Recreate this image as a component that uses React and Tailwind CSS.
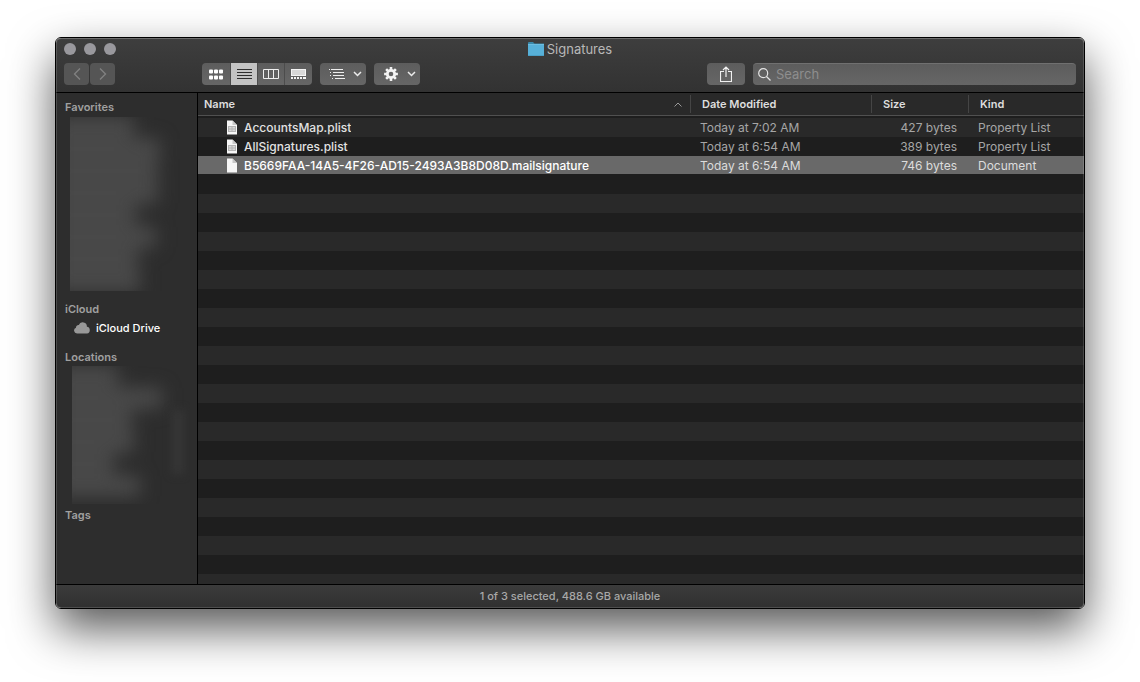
import React, { useState } from "react";

const files = [
  {
    name: "AccountsMap.plist",
    modified: "Today at 7:02 AM",
    size: "427 bytes",
    kind: "Property List",
    plist: true,
  },
  {
    name: "AllSignatures.plist",
    modified: "Today at 6:54 AM",
    size: "389 bytes",
    kind: "Property List",
    plist: true,
  },
  {
    name: "B5669FAA-14A5-4F26-AD15-2493A3B8D08D.mailsignature",
    modified: "Today at 6:54 AM",
    size: "746 bytes",
    kind: "Document",
    plist: false,
  },
];

const FolderIcon = () => (
  <svg width="16" height="14" viewBox="0 0 16 14" aria-hidden="true">
    <path d="M0 1Q0 0 1 0H5L6.5 1.5H16V5H0Z" fill="#3a87a8" />
    <path d="M0 2.5H16V14H0Z" fill="#57b0d8" />
    <path d="M0 2H16V3H0Z" fill="#6cbcdf" />
    <path d="M0 13H16V14H0Z" fill="#4a9fc6" />
  </svg>
);

const FileIcon = ({ plist }) => (
  <svg width="12" height="15" viewBox="0 0 12 15" className="shrink-0" aria-hidden="true">
    <path d="M1 .5H6.5L11 5V14.5H1Z" fill="#f6f6f6" />
    <path d="M6.5 .5V5H11Z" fill="#c8c8c8" />
    {plist && (
      <g>
        <rect x="2" y="6" width="8" height="6" fill="#b4b4b4" />
        <path d="M3 7H5.5V8.5H3ZM6.5 7H9V8.5H6.5ZM3 9.5H5.5V11H3ZM6.5 9.5H9V11H6.5Z" fill="#d8d8d8" />
      </g>
    )}
  </svg>
);

const ChevronDown = () => (
  <svg width="9" height="6" viewBox="0 0 9 6" fill="none" stroke="#ececec" strokeWidth="1.5" aria-hidden="true">
    <path d="M1 1L4.5 4.5L8 1" />
  </svg>
);

const GridIcon = () => (
  <svg width="15" height="11" viewBox="0 0 15 11" fill="#fff" aria-hidden="true">
    {[0, 5, 10].map((x) => (
      <g key={x}>
        <rect x={x} y="0.5" width="4" height="4" rx="1" />
        <rect x={x} y="6.5" width="4" height="4" rx="1" />
      </g>
    ))}
  </svg>
);

const ListIcon = () => (
  <svg width="15" height="10" viewBox="0 0 15 10" stroke="#2e2e2e" aria-hidden="true">
    <path d="M0 .5H15M0 3.5H15M0 6.5H15M0 9.5H15" />
  </svg>
);

const ColumnsIcon = () => (
  <svg width="16" height="10" viewBox="0 0 16 10" fill="none" stroke="#efefef" aria-hidden="true">
    <path d="M.5 .5H15.5V9.5H.5ZM5.5 .5V9.5M10.5 .5V9.5" />
  </svg>
);

const GalleryIcon = () => (
  <svg width="15" height="10" viewBox="0 0 15 10" aria-hidden="true">
    <rect x=".5" y=".5" width="14" height="6" fill="#d9d9d9" stroke="#f5f5f5" />
    <path d="M0 9H2M3 9H5M6 9H8M9 9H11M12 9H15" stroke="#f5f5f5" strokeWidth="2" />
  </svg>
);

const ArrangeIcon = () => (
  <svg width="17" height="10" viewBox="0 0 17 10" stroke="#efefef" aria-hidden="true">
    <path d="M0 .5H1M2 .5H14M1 3.5H2M4 3.5H15M1 6.5H2M4 6.5H15M3 9.5H4M6 9.5H16" />
  </svg>
);

const GearIcon = () => (
  <svg width="14" height="14" viewBox="-7 -7 14 14" aria-hidden="true">
    <circle r="3.7" fill="none" stroke="#f2f2f2" strokeWidth="2.8" />
    {[0, 45, 90, 135].map((angle) => (
      <path
        key={angle}
        d="M0 -6.9V-4M0 4V6.9"
        stroke="#f2f2f2"
        strokeWidth="2.6"
        transform={`rotate(${angle})`}
      />
    ))}
  </svg>
);

const ShareIcon = () => (
  <svg width="12" height="16" viewBox="0 0 12 16" fill="none" stroke="#f0f0f0" aria-hidden="true">
    <path d="M4 5.5H.5V15.5H11.5V5.5H8M6 11V1.2M3 4L6 1L9 4" strokeWidth="1.2" />
  </svg>
);

const SearchIcon = () => (
  <svg width="13" height="13" viewBox="0 0 13 13" fill="none" stroke="#e4e4e4" strokeWidth="1.2" aria-hidden="true">
    <circle cx="5.2" cy="5.2" r="4.5" />
    <path d="M8.5 8.5L12.5 12.5" />
  </svg>
);

const CloudIcon = () => (
  <svg width="16" height="12" viewBox="0 0 16 12" aria-hidden="true">
    <path
      d="M3 11.5A3 3 0 0 1 2 5.7A2.5 2.5 0 0 1 4.8 3A4.2 4.2 0 0 1 12.9 4.8A3.4 3.4 0 0 1 13 11.5Z"
      fill="#989898"
    />
  </svg>
);

const views = [
  { id: "icons", label: "Icons", Icon: GridIcon, width: "w-[29px]" },
  { id: "list", label: "List", Icon: ListIcon, width: "w-[27px]" },
  { id: "columns", label: "Columns", Icon: ColumnsIcon, width: "w-[27px]" },
  { id: "gallery", label: "Gallery", Icon: GalleryIcon, width: "w-[27px]" },
];

const Toolbar = () => {
  const [view, setView] = useState("list");
  const [query, setQuery] = useState("");

  const buttonStyle = "flex items-center bg-linear-to-b from-[#5d5d5d] to-[#666666]";

  return (
    <header className="border-b border-black bg-linear-to-b from-[#3e3e3e] to-[#323232]">
      <div className="grid h-6 grid-cols-[1fr_auto_1fr] items-center px-2 pb-[2px]">
        <div className="flex gap-2">
          <button aria-label="Close" className="size-3 rounded-full bg-[#99989d]" />
          <button aria-label="Minimize" className="size-3 rounded-full bg-[#99989d]" />
          <button aria-label="Zoom" className="size-3 rounded-full bg-[#99989d]" />
        </div>
        <h1 className="flex items-center gap-[3px] text-[13px] leading-4 text-[#b8b8b8]">
          <FolderIcon />
          Signatures
        </h1>
      </div>

      <div className="flex h-[30px] px-2 pt-px">
        <div className="mr-[87px] flex h-[22px] gap-px text-[#828282]">
          <button aria-label="Back" className="flex w-[25px] items-center justify-center rounded bg-[#555555]">
            <svg width="8" height="12" viewBox="0 0 8 12" fill="none" stroke="currentColor" strokeWidth="1.3">
              <path d="M7 .5L1.5 6L7 11.5" />
            </svg>
          </button>
          <button aria-label="Forward" className="flex w-[25px] items-center justify-center rounded bg-[#555555]">
            <svg width="8" height="12" viewBox="0 0 8 12" fill="none" stroke="currentColor" strokeWidth="1.3">
              <path d="M1 .5L6.5 6L1 11.5" />
            </svg>
          </button>
        </div>

        <div className="mr-2 flex h-[22px] divide-x divide-[#4c4c4c] overflow-hidden rounded">
          {views.map(({ id, label, Icon, width }) => (
            <button
              key={id}
              aria-label={label}
              onClick={() => setView(id)}
              className={`flex items-center justify-center ${width} ${
                view === id ? "bg-[#c3c3c3]" : "bg-linear-to-b from-[#5d5d5d] to-[#666666]"
              }`}
            >
              <Icon />
            </button>
          ))}
        </div>

        <button aria-label="Arrange" className={`${buttonStyle} mr-2 h-[22px] w-[46px] justify-between rounded pr-1 pl-[9px]`}>
          <ArrangeIcon />
          <ChevronDown />
        </button>
        <button aria-label="Action" className={`${buttonStyle} h-[22px] w-[46px] justify-between rounded pr-1 pl-[10px]`}>
          <GearIcon />
          <ChevronDown />
        </button>

        <button aria-label="Share" className={`${buttonStyle} mr-2 ml-auto h-[22px] w-[38px] justify-center rounded`}>
          <ShareIcon />
        </button>
        <label className={`${buttonStyle} h-[22px] w-[323px] gap-[5px] rounded border-t border-[#707070] px-[5px]`}>
          <SearchIcon />
          <input
            type="text"
            aria-label="Search"
            placeholder="Search"
            value={query}
            onChange={(e) => setQuery(e.target.value)}
            className="min-w-0 flex-1 bg-transparent text-[13px] text-white outline-none placeholder:text-[#8e8e8e]"
          />
        </label>
      </div>
    </header>
  );
};

const favoriteBars = [
  "w-[80px]",
  "w-[106px]",
  "w-[104px]",
  "w-[104px]",
  "w-[82px]",
  "w-[102px]",
  "w-[84px]",
  "w-[86px]",
];

const locationBars = ["w-[62px]", "w-[106px]", "w-[76px]", "w-[78px]", "w-[58px]", "w-[84px]"];

const Sidebar = () => (
  <nav className="w-[142px] shrink-0 border-r border-black bg-[#2d2d2d] text-[11px] leading-4 font-semibold text-[#a0a0a0]">
    <h2 className="pt-[6px] pl-[9px]">Favorites</h2>
    <div className="mt-[2px] ml-[14px] h-[174px] w-[110px] overflow-hidden">
      <div className="-ml-4 flex flex-col gap-[2px] blur-[9px]">
        {favoriteBars.map((width, i) => (
          <div key={i} className={`h-5 bg-[#4b4b4b] ${width}`} />
        ))}
      </div>
    </div>

    <h2 className="pt-[10px] pl-[9px]">iCloud</h2>
    <a href="#icloud" className="mt-[3px] flex items-center gap-[6px] pl-[18px] font-medium text-white">
      <CloudIcon />
      iCloud Drive
    </a>

    <h2 className="pt-[13px] pl-[9px]">Locations</h2>
    <div className="mt-px ml-4 flex h-[138px] w-[118px] justify-between overflow-hidden">
      <div className="-ml-4 flex flex-col gap-[2px] blur-[9px]">
        {locationBars.map((width, i) => (
          <div key={i} className={`h-5 bg-[#4b4b4b] ${width}`} />
        ))}
      </div>
      <div className="mt-11 mr-[6px] -ml-3 h-16 w-3 bg-[#363636] blur-[4px]" />
    </div>

    <h2 className="pt-[3px] pl-[9px]">Tags</h2>
  </nav>
);

const HeaderCell = ({ children, className }) => (
  <th className="h-[25px] p-0 align-top font-semibold">
    <div className="h-[23px] border-b border-[#505050] bg-[#292929] pt-[2px]">
      <div className={`flex h-[18px] items-center ${className}`}>{children}</div>
    </div>
  </th>
);

const FileList = () => {
  const [selected, setSelected] = useState(2);

  return (
    <main className="min-w-0 flex-1 bg-[#1e1e1e] bg-[repeating-linear-gradient(#292929_0_19px,#1e1e1e_19px_38px)] bg-[position:0_25px] bg-no-repeat">
      <table className="w-full table-fixed border-collapse text-left text-[12px] leading-[18px]">
        <colgroup>
          <col />
          <col className="w-[181px]" />
          <col className="w-[97px]" />
          <col className="w-[116px]" />
        </colgroup>
        <thead className="bg-[#1e1e1e] text-[11px] text-[#dedede]">
          <tr>
            <HeaderCell className="justify-between pr-2 pl-[6px]">
              Name
              <svg width="8" height="5" viewBox="0 0 8 5" fill="none" stroke="#999" aria-hidden="true">
                <path d="M.5 4.5L4 1L7.5 4.5" />
              </svg>
            </HeaderCell>
            <HeaderCell className="border-l border-[#454545] pl-[11px]">Date Modified</HeaderCell>
            <HeaderCell className="border-l border-[#454545] pl-[11px]">Size</HeaderCell>
            <HeaderCell className="border-l border-[#454545] pl-[11px]">Kind</HeaderCell>
          </tr>
        </thead>
        <tbody>
          {files.map((file, i) => (
            <tr
              key={file.name}
              onClick={() => setSelected(i)}
              className={`h-[19px] ${
                selected === i
                  ? "bg-[linear-gradient(#696969_18px,#1e1e1e_18px)] text-[#dcdcdc]"
                  : "text-[#a6a6a6]"
              }`}
            >
              <td className="p-0 pl-7">
                <div className={`flex items-center gap-[6px] font-medium ${selected === i ? "text-white" : "text-[#e2e2e2]"}`}>
                  <FileIcon plist={file.plist} />
                  <span className="truncate">{file.name}</span>
                </div>
              </td>
              <td className="p-0 pl-[10px]">{file.modified}</td>
              <td className="p-0 pr-[11px] text-right">{file.size}</td>
              <td className="p-0 pl-[10px]">{file.kind}</td>
            </tr>
          ))}
        </tbody>
      </table>
    </main>
  );
};

export default function App() {
  return (
    <div className="flex min-h-screen bg-white px-[55px] pt-[37px] pb-[73px] font-['Inter','Liberation_Sans',sans-serif]">
      <div className="relative flex min-w-0 flex-1 rounded-md border border-black shadow-[0_20px_46px_rgba(0,0,0,0.66)]">
        <div className="flex min-w-0 flex-1 flex-col overflow-hidden rounded-[5px]">
          <Toolbar />
          <div className="flex flex-1">
            <Sidebar />
            <FileList />
          </div>
          <footer className="flex h-6 items-center justify-center border-t border-black bg-linear-to-b from-[#3b3b3b] to-[#303030] text-[11px] font-medium text-[#a8a8a8]">
            1 of 3 selected, 488.6 GB available
          </footer>
        </div>
        {/* light rim inside the window edge */}
        <div className="pointer-events-none absolute inset-0 rounded-[5px] border border-white/15 border-t-white/25" />
      </div>
    </div>
  );
}
